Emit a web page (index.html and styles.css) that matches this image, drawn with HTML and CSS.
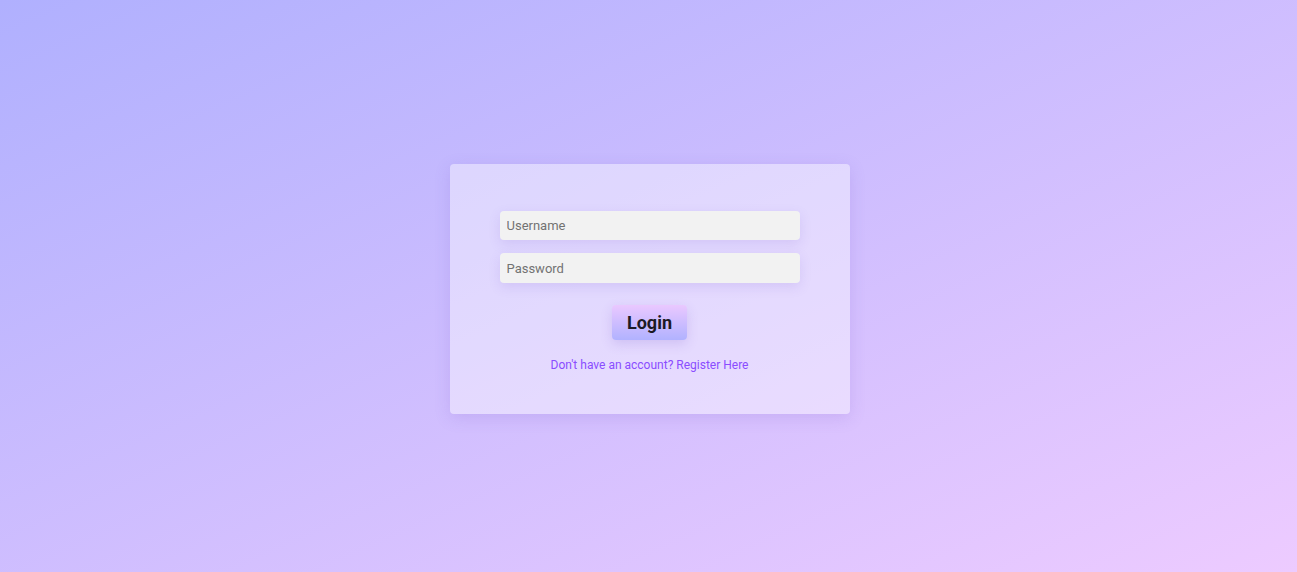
FILE: index.html
```html
<!DOCTYPE html>
<html lang="en">
<head>
<meta charset="utf-8">
<title>Login</title>
<link rel="stylesheet" href="styles.css">
</head>
<body>
<main class="page">
  <form class="card">
    <input class="field" type="text" placeholder="Username">
    <input class="field" type="password" placeholder="Password">
    <button class="btn" type="button">Login</button>
    <a class="link" href="#">Don't have an account? Register Here</a>
  </form>
</main>
</body>
</html>
```

FILE: styles.css
```css
* { box-sizing: border-box; }
html, body { margin: 0; height: 100%; }
body {
  background: linear-gradient(to bottom right, #b0b0fe, #edcbff);
  font-family: Roboto, "Liberation Sans", sans-serif;
}
.page {
  min-height: 100vh;
  display: flex;
  align-items: center;
  justify-content: center;
  padding-top: 6px;
  padding-left: 2px;
}
.card {
  width: 400px;
  height: 250px;
  padding: 47px 50px 0;
  background: rgba(255, 255, 255, 0.42);
  border-radius: 4px;
  box-shadow: 0 4px 16px rgba(120, 90, 200, 0.18);
  display: flex;
  flex-direction: column;
  align-items: center;
}
.field {
  width: 300px;
  height: 29px;
  border: none;
  border-radius: 4px;
  background: #f2f2f2;
  padding: 0 7px;
  font-family: Roboto, "Liberation Sans", sans-serif;
  font-size: 13px;
  color: #333;
  box-shadow: 0 4px 12px rgba(120, 90, 200, 0.15);
  outline: none;
}
.field + .field { margin-top: 13px; height: 30px; }
.field::placeholder { color: #727272; }
.btn {
  margin-top: 22px;
  width: 75px;
  height: 35px;
  border: none;
  border-radius: 4px;
  background: linear-gradient(to bottom, #eac8ff, #b1b2ff);
  font-family: Roboto, "Liberation Sans", sans-serif;
  font-weight: 700;
  font-size: 18px;
  color: #1c1a24;
  box-shadow: 0 4px 12px rgba(120, 90, 200, 0.2);
  cursor: pointer;
}
.link {
  margin-top: 18px;
  font-size: 12px;
  color: #8a4dff;
  text-decoration: none;
}
```
